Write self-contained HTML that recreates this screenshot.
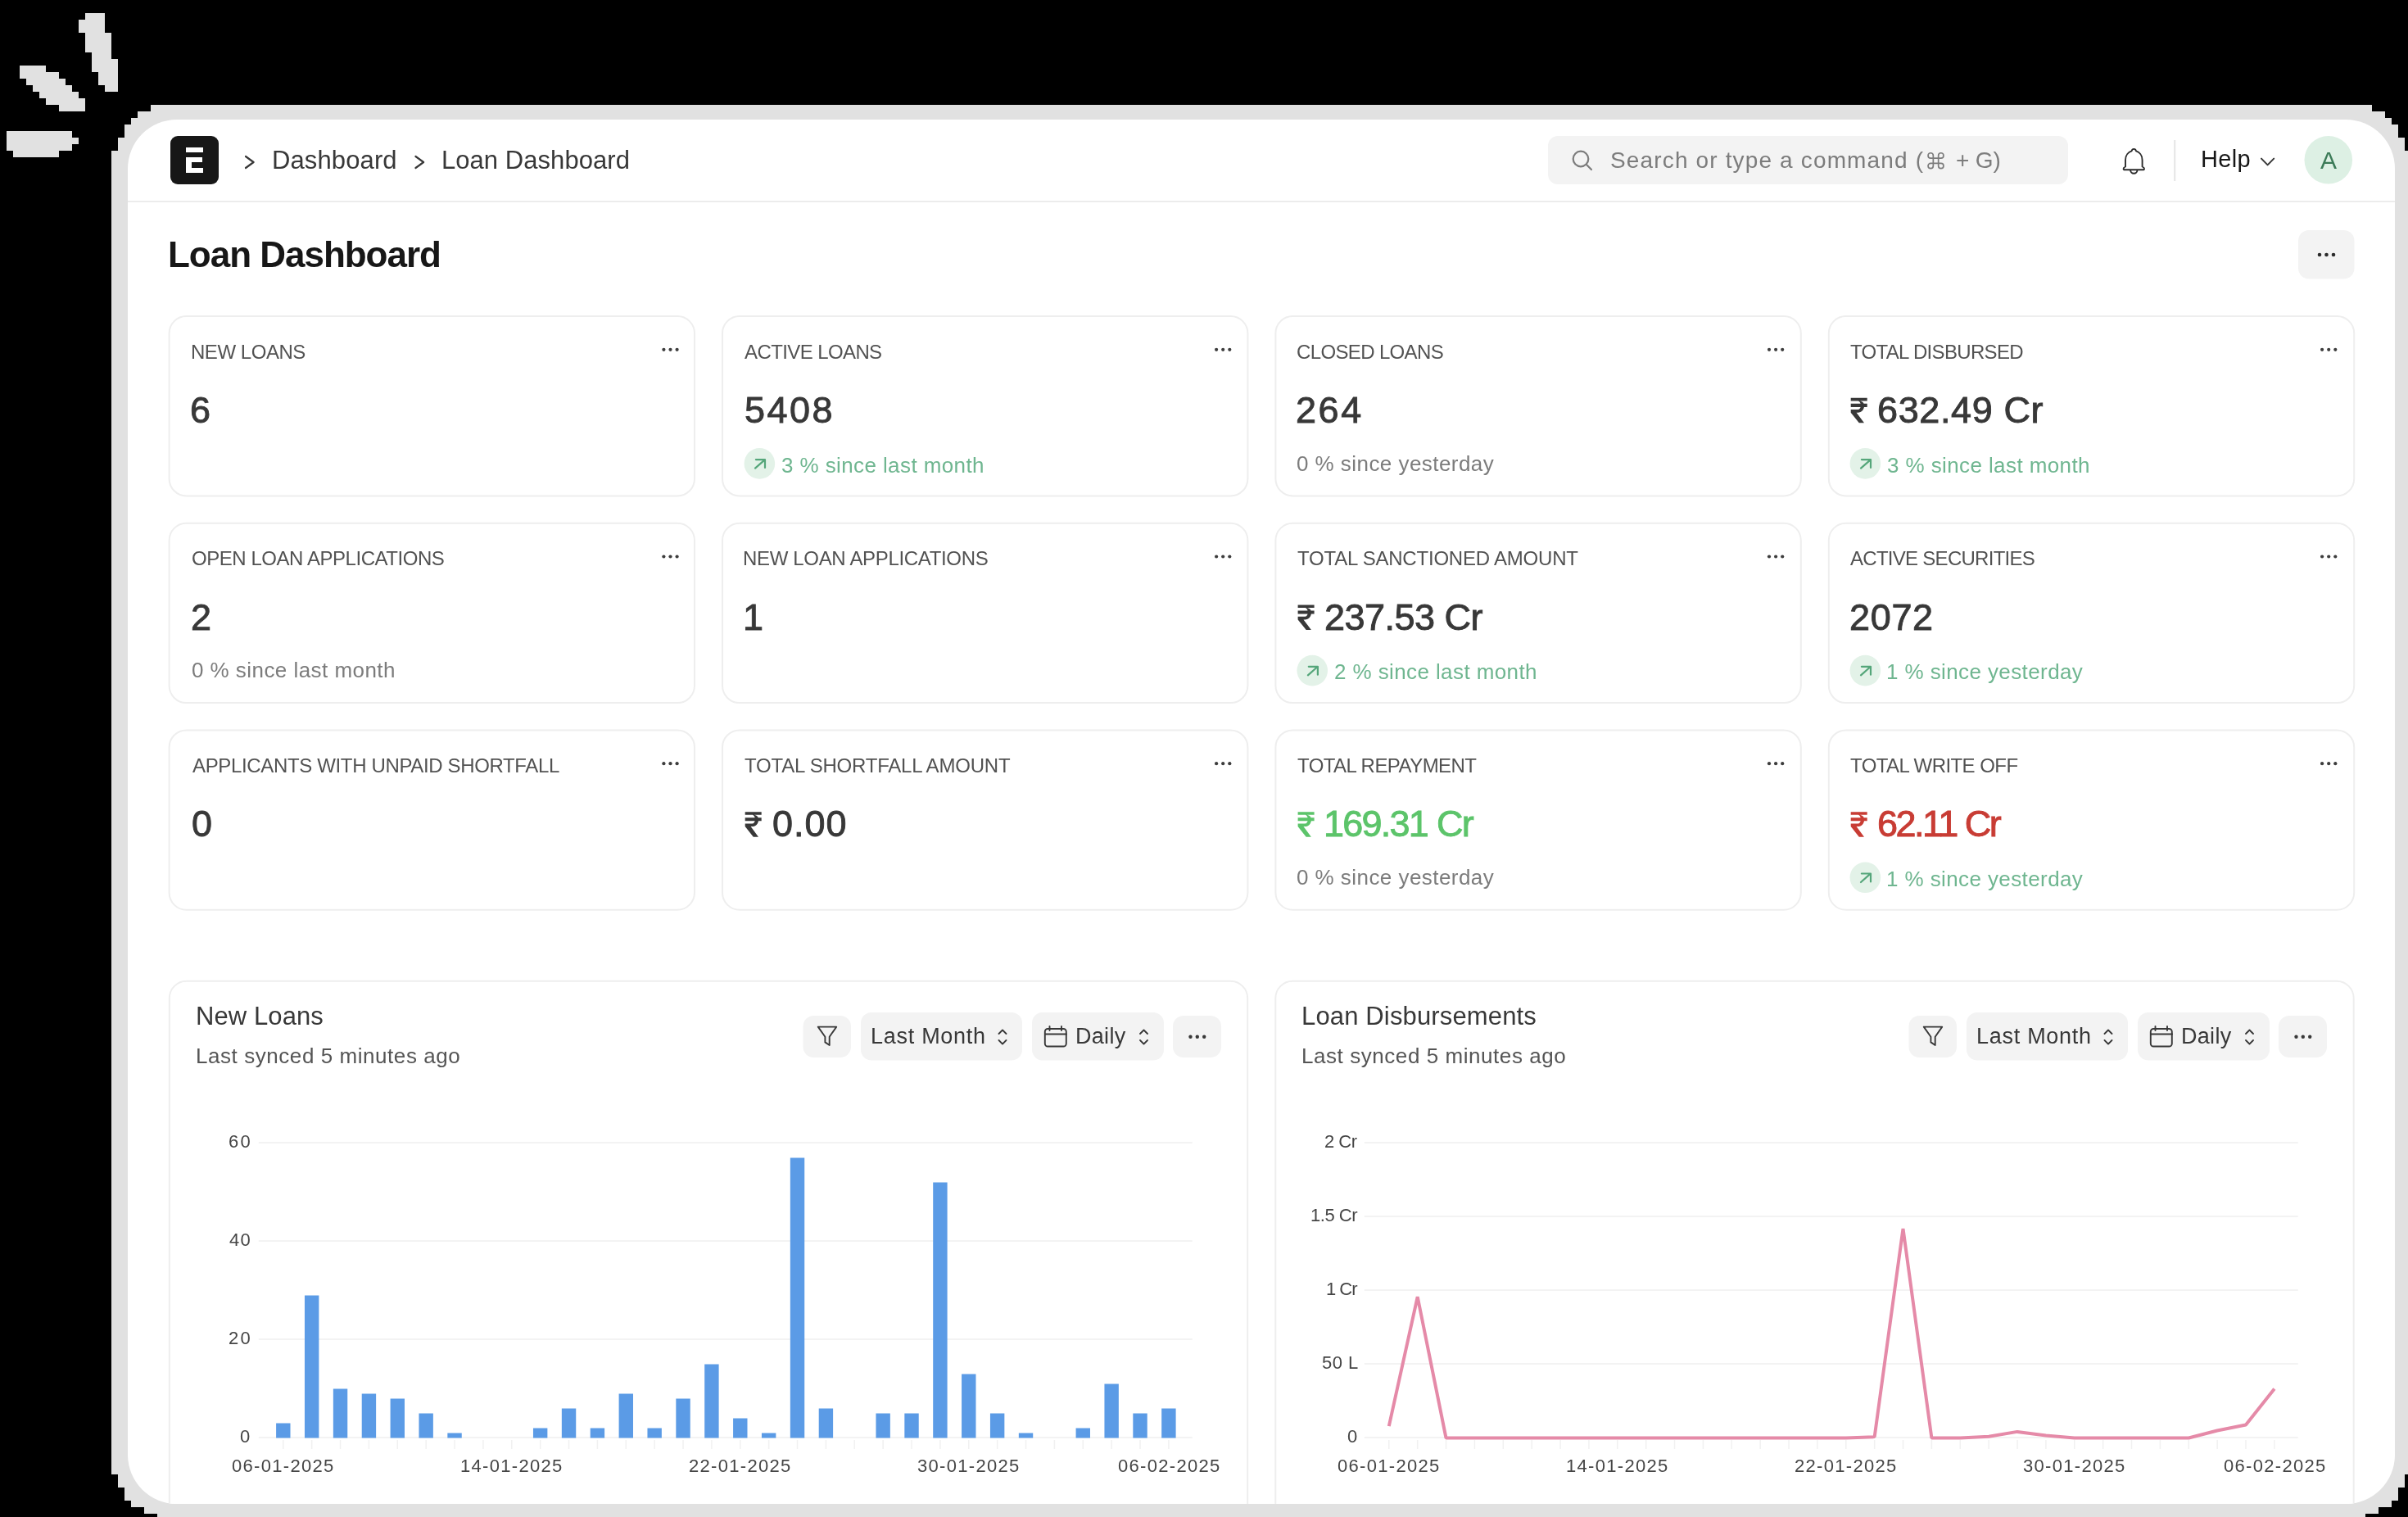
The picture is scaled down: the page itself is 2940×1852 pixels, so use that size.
<!DOCTYPE html>
<html><head><meta charset="utf-8"><title>Loan Dashboard</title>
<style>
html,body{margin:0;padding:0;background:#000;width:2940px;height:1852px;overflow:hidden}
svg{position:absolute;left:0;top:0}
.t{position:absolute;white-space:nowrap;line-height:1;font-family:'Liberation Sans', sans-serif;will-change:transform}
</style></head><body>
<svg width="2940" height="1852" viewBox="0 0 2940 1852">
<rect x="104" y="16" width="24" height="24" rx="0" fill="#e1e1e1"/>
<rect x="96" y="24" width="8" height="16" rx="0" fill="#e1e1e1"/>
<rect x="104" y="40" width="32" height="24" rx="0" fill="#e1e1e1"/>
<rect x="112" y="64" width="24" height="8" rx="0" fill="#e1e1e1"/>
<rect x="112" y="72" width="32" height="16" rx="0" fill="#e1e1e1"/>
<rect x="120" y="88" width="24" height="16" rx="0" fill="#e1e1e1"/>
<rect x="128" y="104" width="16" height="8" rx="0" fill="#e1e1e1"/>
<rect x="24" y="80" width="32" height="8" rx="0" fill="#e1e1e1"/>
<rect x="24" y="88" width="48" height="8" rx="0" fill="#e1e1e1"/>
<rect x="32" y="96" width="48" height="8" rx="0" fill="#e1e1e1"/>
<rect x="40" y="104" width="48" height="8" rx="0" fill="#e1e1e1"/>
<rect x="48" y="112" width="48" height="8" rx="0" fill="#e1e1e1"/>
<rect x="56" y="120" width="48" height="8" rx="0" fill="#e1e1e1"/>
<rect x="72" y="128" width="32" height="8" rx="0" fill="#e1e1e1"/>
<rect x="8" y="160" width="80" height="8" rx="0" fill="#e1e1e1"/>
<rect x="8" y="168" width="88" height="8" rx="0" fill="#e1e1e1"/>
<rect x="8" y="176" width="80" height="8" rx="0" fill="#e1e1e1"/>
<rect x="16" y="184" width="56" height="8" rx="0" fill="#e1e1e1"/>
<rect x="184" y="128" width="2712" height="8" rx="0" fill="#e1e1e1"/>
<rect x="168" y="136" width="2744" height="8" rx="0" fill="#e1e1e1"/>
<rect x="160" y="144" width="2760" height="8" rx="0" fill="#e1e1e1"/>
<rect x="152" y="152" width="2776" height="16" rx="0" fill="#e1e1e1"/>
<rect x="144" y="168" width="2792" height="16" rx="0" fill="#e1e1e1"/>
<rect x="136" y="184" width="2808" height="1616" rx="0" fill="#e1e1e1"/>
<rect x="144" y="1800" width="2792" height="16" rx="0" fill="#e1e1e1"/>
<rect x="152" y="1816" width="2776" height="16" rx="0" fill="#e1e1e1"/>
<rect x="160" y="1832" width="2760" height="8" rx="0" fill="#e1e1e1"/>
<rect x="176" y="1840" width="2728" height="8" rx="0" fill="#e1e1e1"/>
<rect x="192" y="1848" width="2696" height="12" rx="0" fill="#e1e1e1"/>
<rect x="156" y="146" width="2768" height="1690" rx="60" fill="#ffffff"/>
<defs><clipPath id="cl"><rect x="156" y="146" width="2768" height="1690" rx="60"/></clipPath></defs>
<g clip-path="url(#cl)">
<rect x="156" y="245" width="2768" height="2" rx="0" fill="#ececec"/>
<rect x="208" y="166" width="59" height="59" rx="9" fill="#171717"/>
<path d="M227 180h21v6h-21z M227 192h20v6h-13v7h14v6h-21z" fill="#fff"/>
<path d="M300.0 191 L309.6 198 L300.0 205" fill="none" stroke="#383838" stroke-width="2.2" stroke-linecap="round" stroke-linejoin="round"/>
<path d="M507.49999999999994 191 L517.0999999999999 198 L507.49999999999994 205" fill="none" stroke="#383838" stroke-width="2.2" stroke-linecap="round" stroke-linejoin="round"/>
<rect x="1890" y="166" width="635" height="59" rx="12" fill="#f3f3f3"/>
<circle cx="1930" cy="194" r="9.3" fill="none" stroke="#7c7c7c" stroke-width="2.2"/><path d="M1937 201 L1943 207" stroke="#7c7c7c" stroke-width="2.2" stroke-linecap="round"/>
<g transform="translate(2350.9,183.6) scale(1.05)"><path d="M15 6v12a3 3 0 1 0 3-3H6a3 3 0 1 0 3 3V6a3 3 0 1 0-3 3h12a3 3 0 1 0-3-3" fill="none" stroke="#7c7c7c" stroke-width="1.62"/></g>
<path d="M2595 203.5 L2595 195.5 C2595 189.5 2598.8 185.6 2602.6 184.4 C2603 182.7 2604 181.9 2605.3 181.9 C2606.6 181.9 2607.6 182.7 2608 184.4 C2611.8 185.6 2615.6 189.5 2615.6 195.5 L2615.6 203.5 C2617.2 204.2 2618 205 2618 205.9 C2618 206.8 2617.3 207.3 2616.3 207.3 L2594.3 207.3 C2593.3 207.3 2592.6 206.8 2592.6 205.9 C2592.6 205 2593.4 204.2 2595 203.5 Z M2601.1 207.5 A4.2 4.2 0 0 0 2609.5 207.5" fill="none" stroke="#2b2b2b" stroke-width="1.9" stroke-linejoin="round"/>
<rect x="2654.2" y="171" width="2" height="50" rx="0" fill="#e5e5e5"/>
<path d="M2761 193.6 L2768.6 201.4 L2776.2 193.6" fill="none" stroke="#383838" stroke-width="2" stroke-linecap="round" stroke-linejoin="round"/>
<circle cx="2842.8" cy="195.3" r="29.3" fill="#ddf0e4"/>
<rect x="2806" y="281" width="68.5" height="59.5" rx="13" fill="#f3f3f3"/>
<circle cx="2832" cy="311" r="2.3" fill="#2b2b2b"/>
<circle cx="2840.5" cy="311" r="2.3" fill="#2b2b2b"/>
<circle cx="2849" cy="311" r="2.3" fill="#2b2b2b"/>
<rect x="206.6" y="386.0" width="641.4" height="219.4" rx="21" fill="#fff" stroke="#eeeeee" stroke-width="2"/>
<circle cx="810.4" cy="426.8" r="2.1" fill="#3d3d3d"/>
<circle cx="818.5" cy="426.8" r="2.1" fill="#3d3d3d"/>
<circle cx="826.6" cy="426.8" r="2.1" fill="#3d3d3d"/>
<rect x="882.0" y="386.0" width="641.4" height="219.4" rx="21" fill="#fff" stroke="#eeeeee" stroke-width="2"/>
<circle cx="1485.1" cy="426.8" r="2.1" fill="#3d3d3d"/>
<circle cx="1493.2" cy="426.8" r="2.1" fill="#3d3d3d"/>
<circle cx="1501.3000000000002" cy="426.8" r="2.1" fill="#3d3d3d"/>
<circle cx="927.35" cy="565.9" r="18.8" fill="#e3f2e8"/>
<path d="M922.0 571.6 L933.7 561.3 M922.9000000000001 561.1 H934.0 V571" fill="none" stroke="#55a67a" stroke-width="2.2" stroke-linecap="round" stroke-linejoin="round"/>
<rect x="1557.3999999999999" y="386.0" width="641.4" height="219.4" rx="21" fill="#fff" stroke="#eeeeee" stroke-width="2"/>
<circle cx="2160.0" cy="426.8" r="2.1" fill="#3d3d3d"/>
<circle cx="2168.1" cy="426.8" r="2.1" fill="#3d3d3d"/>
<circle cx="2176.2" cy="426.8" r="2.1" fill="#3d3d3d"/>
<rect x="2232.7999999999997" y="386.0" width="641.4" height="219.4" rx="21" fill="#fff" stroke="#eeeeee" stroke-width="2"/>
<circle cx="2835.1" cy="426.8" r="2.1" fill="#3d3d3d"/>
<circle cx="2843.2" cy="426.8" r="2.1" fill="#3d3d3d"/>
<circle cx="2851.2999999999997" cy="426.8" r="2.1" fill="#3d3d3d"/>
<path transform="translate(2259.7,485.8) scale(1.0)" d="M0 0H20V3.6H0Z M0 7H20V11.1H0Z M0 14.3H8.4C10.9 14.3 12.2 12.2 12.2 9.3C12.2 6.3 10.9 3.6 8.4 3.6H9.6C14.4 3.6 16.4 6.2 16.4 9.3C16.4 14.6 13.2 17.9 8.6 17.9H0Z M0 17.9H6.9L16.3 30.5H10.1Z" fill="#383838"/>
<circle cx="2277.35" cy="565.9" r="18.8" fill="#e3f2e8"/>
<path d="M2272.0 571.6 L2283.7 561.3 M2272.8999999999996 561.1 H2284.0 V571" fill="none" stroke="#55a67a" stroke-width="2.2" stroke-linecap="round" stroke-linejoin="round"/>
<rect x="206.6" y="638.7" width="641.4" height="219.4" rx="21" fill="#fff" stroke="#eeeeee" stroke-width="2"/>
<circle cx="810.4" cy="679.5" r="2.1" fill="#3d3d3d"/>
<circle cx="818.5" cy="679.5" r="2.1" fill="#3d3d3d"/>
<circle cx="826.6" cy="679.5" r="2.1" fill="#3d3d3d"/>
<rect x="882.0" y="638.7" width="641.4" height="219.4" rx="21" fill="#fff" stroke="#eeeeee" stroke-width="2"/>
<circle cx="1485.1" cy="679.5" r="2.1" fill="#3d3d3d"/>
<circle cx="1493.2" cy="679.5" r="2.1" fill="#3d3d3d"/>
<circle cx="1501.3000000000002" cy="679.5" r="2.1" fill="#3d3d3d"/>
<rect x="1557.3999999999999" y="638.7" width="641.4" height="219.4" rx="21" fill="#fff" stroke="#eeeeee" stroke-width="2"/>
<circle cx="2160.0" cy="679.5" r="2.1" fill="#3d3d3d"/>
<circle cx="2168.1" cy="679.5" r="2.1" fill="#3d3d3d"/>
<circle cx="2176.2" cy="679.5" r="2.1" fill="#3d3d3d"/>
<path transform="translate(1584.6,738.5) scale(1.0)" d="M0 0H20V3.6H0Z M0 7H20V11.1H0Z M0 14.3H8.4C10.9 14.3 12.2 12.2 12.2 9.3C12.2 6.3 10.9 3.6 8.4 3.6H9.6C14.4 3.6 16.4 6.2 16.4 9.3C16.4 14.6 13.2 17.9 8.6 17.9H0Z M0 17.9H6.9L16.3 30.5H10.1Z" fill="#383838"/>
<circle cx="1602.25" cy="818.6" r="18.8" fill="#e3f2e8"/>
<path d="M1596.8999999999999 824.3000000000001 L1608.6 814.0 M1597.8 813.8000000000001 H1608.8999999999999 V823.7" fill="none" stroke="#55a67a" stroke-width="2.2" stroke-linecap="round" stroke-linejoin="round"/>
<rect x="2232.7999999999997" y="638.7" width="641.4" height="219.4" rx="21" fill="#fff" stroke="#eeeeee" stroke-width="2"/>
<circle cx="2835.1" cy="679.5" r="2.1" fill="#3d3d3d"/>
<circle cx="2843.2" cy="679.5" r="2.1" fill="#3d3d3d"/>
<circle cx="2851.2999999999997" cy="679.5" r="2.1" fill="#3d3d3d"/>
<circle cx="2277.35" cy="818.6" r="18.8" fill="#e3f2e8"/>
<path d="M2272.0 824.3000000000001 L2283.7 814.0 M2272.8999999999996 813.8000000000001 H2284.0 V823.7" fill="none" stroke="#55a67a" stroke-width="2.2" stroke-linecap="round" stroke-linejoin="round"/>
<rect x="206.6" y="891.4" width="641.4" height="219.4" rx="21" fill="#fff" stroke="#eeeeee" stroke-width="2"/>
<circle cx="810.4" cy="932.1999999999999" r="2.1" fill="#3d3d3d"/>
<circle cx="818.5" cy="932.1999999999999" r="2.1" fill="#3d3d3d"/>
<circle cx="826.6" cy="932.1999999999999" r="2.1" fill="#3d3d3d"/>
<rect x="882.0" y="891.4" width="641.4" height="219.4" rx="21" fill="#fff" stroke="#eeeeee" stroke-width="2"/>
<circle cx="1485.1" cy="932.1999999999999" r="2.1" fill="#3d3d3d"/>
<circle cx="1493.2" cy="932.1999999999999" r="2.1" fill="#3d3d3d"/>
<circle cx="1501.3000000000002" cy="932.1999999999999" r="2.1" fill="#3d3d3d"/>
<path transform="translate(909.7,991.1999999999999) scale(1.0)" d="M0 0H20V3.6H0Z M0 7H20V11.1H0Z M0 14.3H8.4C10.9 14.3 12.2 12.2 12.2 9.3C12.2 6.3 10.9 3.6 8.4 3.6H9.6C14.4 3.6 16.4 6.2 16.4 9.3C16.4 14.6 13.2 17.9 8.6 17.9H0Z M0 17.9H6.9L16.3 30.5H10.1Z" fill="#383838"/>
<rect x="1557.3999999999999" y="891.4" width="641.4" height="219.4" rx="21" fill="#fff" stroke="#eeeeee" stroke-width="2"/>
<circle cx="2160.0" cy="932.1999999999999" r="2.1" fill="#3d3d3d"/>
<circle cx="2168.1" cy="932.1999999999999" r="2.1" fill="#3d3d3d"/>
<circle cx="2176.2" cy="932.1999999999999" r="2.1" fill="#3d3d3d"/>
<path transform="translate(1584.6,991.1999999999999) scale(1.0)" d="M0 0H20V3.6H0Z M0 7H20V11.1H0Z M0 14.3H8.4C10.9 14.3 12.2 12.2 12.2 9.3C12.2 6.3 10.9 3.6 8.4 3.6H9.6C14.4 3.6 16.4 6.2 16.4 9.3C16.4 14.6 13.2 17.9 8.6 17.9H0Z M0 17.9H6.9L16.3 30.5H10.1Z" fill="#5cc46a"/>
<rect x="2232.7999999999997" y="891.4" width="641.4" height="219.4" rx="21" fill="#fff" stroke="#eeeeee" stroke-width="2"/>
<circle cx="2835.1" cy="932.1999999999999" r="2.1" fill="#3d3d3d"/>
<circle cx="2843.2" cy="932.1999999999999" r="2.1" fill="#3d3d3d"/>
<circle cx="2851.2999999999997" cy="932.1999999999999" r="2.1" fill="#3d3d3d"/>
<path transform="translate(2259.7,991.1999999999999) scale(1.0)" d="M0 0H20V3.6H0Z M0 7H20V11.1H0Z M0 14.3H8.4C10.9 14.3 12.2 12.2 12.2 9.3C12.2 6.3 10.9 3.6 8.4 3.6H9.6C14.4 3.6 16.4 6.2 16.4 9.3C16.4 14.6 13.2 17.9 8.6 17.9H0Z M0 17.9H6.9L16.3 30.5H10.1Z" fill="#c83c34"/>
<circle cx="2277.35" cy="1071.3" r="18.8" fill="#e3f2e8"/>
<path d="M2272.0 1077.0 L2283.7 1066.7 M2272.8999999999996 1066.5 H2284.0 V1076.4" fill="none" stroke="#55a67a" stroke-width="2.2" stroke-linecap="round" stroke-linejoin="round"/>
<rect x="206.8" y="1197.7" width="1316.4" height="800" rx="21" fill="#fff" stroke="#eeeeee" stroke-width="2"/>
<rect x="980.5" y="1240" width="58.5" height="51" rx="13" fill="#f3f3f3"/>
<path d="M998.8 1253.6 H1021.2 L1012.7 1265.8 V1276 L1007.4 1272.4 V1265.8 Z" fill="none" stroke="#383838" stroke-width="1.9" stroke-linejoin="round"/>
<rect x="1051" y="1236" width="197" height="58.5" rx="13" fill="#f3f3f3"/>
<path d="M1219.5 1262 L1224 1257.5 L1228.5 1262 M1219.5 1270 L1224 1274.5 L1228.5 1270" fill="none" stroke="#383838" stroke-width="1.8" stroke-linecap="round" stroke-linejoin="round"/>
<rect x="1260" y="1236" width="161" height="58.5" rx="13" fill="#f3f3f3"/>
<rect x="1275.8" y="1256" width="26" height="21.5" rx="3.5" fill="none" stroke="#383838" stroke-width="1.9"/><path d="M1276 1262.5 H1302 M1281.5 1253 V1258 M1296 1253 V1258" stroke="#383838" stroke-width="1.9" stroke-linecap="round"/>
<path d="M1392 1262 L1396.5 1257.5 L1401 1262 M1392 1270 L1396.5 1274.5 L1401 1270" fill="none" stroke="#383838" stroke-width="1.8" stroke-linecap="round" stroke-linejoin="round"/>
<rect x="1432" y="1240" width="59" height="51" rx="13" fill="#f3f3f3"/>
<circle cx="1453.5" cy="1265.7" r="2.2" fill="#383838"/>
<circle cx="1461.8" cy="1265.7" r="2.2" fill="#383838"/>
<circle cx="1470.2" cy="1265.7" r="2.2" fill="#383838"/>
<rect x="345.05" y="1758" width="1.5" height="11" rx="0" fill="#f1f1f1"/>
<rect x="379.92400000000004" y="1758" width="1.5" height="11" rx="0" fill="#f1f1f1"/>
<rect x="414.798" y="1758" width="1.5" height="11" rx="0" fill="#f1f1f1"/>
<rect x="449.672" y="1758" width="1.5" height="11" rx="0" fill="#f1f1f1"/>
<rect x="484.54600000000005" y="1758" width="1.5" height="11" rx="0" fill="#f1f1f1"/>
<rect x="519.4200000000001" y="1758" width="1.5" height="11" rx="0" fill="#f1f1f1"/>
<rect x="554.2940000000001" y="1758" width="1.5" height="11" rx="0" fill="#f1f1f1"/>
<rect x="589.168" y="1758" width="1.5" height="11" rx="0" fill="#f1f1f1"/>
<rect x="624.042" y="1758" width="1.5" height="11" rx="0" fill="#f1f1f1"/>
<rect x="658.916" y="1758" width="1.5" height="11" rx="0" fill="#f1f1f1"/>
<rect x="693.79" y="1758" width="1.5" height="11" rx="0" fill="#f1f1f1"/>
<rect x="728.664" y="1758" width="1.5" height="11" rx="0" fill="#f1f1f1"/>
<rect x="763.538" y="1758" width="1.5" height="11" rx="0" fill="#f1f1f1"/>
<rect x="798.412" y="1758" width="1.5" height="11" rx="0" fill="#f1f1f1"/>
<rect x="833.2860000000001" y="1758" width="1.5" height="11" rx="0" fill="#f1f1f1"/>
<rect x="868.1600000000001" y="1758" width="1.5" height="11" rx="0" fill="#f1f1f1"/>
<rect x="903.0340000000001" y="1758" width="1.5" height="11" rx="0" fill="#f1f1f1"/>
<rect x="937.9080000000001" y="1758" width="1.5" height="11" rx="0" fill="#f1f1f1"/>
<rect x="972.7820000000002" y="1758" width="1.5" height="11" rx="0" fill="#f1f1f1"/>
<rect x="1007.656" y="1758" width="1.5" height="11" rx="0" fill="#f1f1f1"/>
<rect x="1042.53" y="1758" width="1.5" height="11" rx="0" fill="#f1f1f1"/>
<rect x="1077.404" y="1758" width="1.5" height="11" rx="0" fill="#f1f1f1"/>
<rect x="1112.278" y="1758" width="1.5" height="11" rx="0" fill="#f1f1f1"/>
<rect x="1147.152" y="1758" width="1.5" height="11" rx="0" fill="#f1f1f1"/>
<rect x="1182.026" y="1758" width="1.5" height="11" rx="0" fill="#f1f1f1"/>
<rect x="1216.9" y="1758" width="1.5" height="11" rx="0" fill="#f1f1f1"/>
<rect x="1251.7740000000001" y="1758" width="1.5" height="11" rx="0" fill="#f1f1f1"/>
<rect x="1286.6480000000001" y="1758" width="1.5" height="11" rx="0" fill="#f1f1f1"/>
<rect x="1321.5220000000002" y="1758" width="1.5" height="11" rx="0" fill="#f1f1f1"/>
<rect x="1356.3960000000002" y="1758" width="1.5" height="11" rx="0" fill="#f1f1f1"/>
<rect x="1391.27" y="1758" width="1.5" height="11" rx="0" fill="#f1f1f1"/>
<rect x="1426.144" y="1758" width="1.5" height="11" rx="0" fill="#f1f1f1"/>
<rect x="315.8" y="1394" width="1139.9" height="2" rx="0" fill="#f3f3f3"/>
<rect x="315.8" y="1514" width="1139.9" height="2" rx="0" fill="#f3f3f3"/>
<rect x="315.8" y="1634" width="1139.9" height="2" rx="0" fill="#f3f3f3"/>
<rect x="315.8" y="1754" width="1139.9" height="2" rx="0" fill="#f3f3f3"/>
<rect x="337.1" y="1737.5" width="17.4" height="18" rx="0" fill="#5b9be6"/>
<rect x="371.97400000000005" y="1581.5" width="17.4" height="174" rx="0" fill="#5b9be6"/>
<rect x="406.848" y="1695.5" width="17.4" height="60" rx="0" fill="#5b9be6"/>
<rect x="441.72200000000004" y="1701.5" width="17.4" height="54" rx="0" fill="#5b9be6"/>
<rect x="476.59600000000006" y="1707.5" width="17.4" height="48" rx="0" fill="#5b9be6"/>
<rect x="511.4700000000001" y="1725.5" width="17.4" height="30" rx="0" fill="#5b9be6"/>
<rect x="546.344" y="1749.5" width="17.4" height="6" rx="0" fill="#5b9be6"/>
<rect x="650.966" y="1743.5" width="17.4" height="12" rx="0" fill="#5b9be6"/>
<rect x="685.8399999999999" y="1719.5" width="17.4" height="36" rx="0" fill="#5b9be6"/>
<rect x="720.7139999999999" y="1743.5" width="17.4" height="12" rx="0" fill="#5b9be6"/>
<rect x="755.588" y="1701.5" width="17.4" height="54" rx="0" fill="#5b9be6"/>
<rect x="790.462" y="1743.5" width="17.4" height="12" rx="0" fill="#5b9be6"/>
<rect x="825.336" y="1707.5" width="17.4" height="48" rx="0" fill="#5b9be6"/>
<rect x="860.21" y="1665.5" width="17.4" height="90" rx="0" fill="#5b9be6"/>
<rect x="895.0840000000001" y="1731.5" width="17.4" height="24" rx="0" fill="#5b9be6"/>
<rect x="929.9580000000001" y="1749.5" width="17.4" height="6" rx="0" fill="#5b9be6"/>
<rect x="964.8320000000001" y="1413.5" width="17.4" height="342" rx="0" fill="#5b9be6"/>
<rect x="999.7059999999999" y="1719.5" width="17.4" height="36" rx="0" fill="#5b9be6"/>
<rect x="1069.454" y="1725.5" width="17.4" height="30" rx="0" fill="#5b9be6"/>
<rect x="1104.328" y="1725.5" width="17.4" height="30" rx="0" fill="#5b9be6"/>
<rect x="1139.202" y="1443.5" width="17.4" height="312" rx="0" fill="#5b9be6"/>
<rect x="1174.076" y="1677.5" width="17.4" height="78" rx="0" fill="#5b9be6"/>
<rect x="1208.95" y="1725.5" width="17.4" height="30" rx="0" fill="#5b9be6"/>
<rect x="1243.824" y="1749.5" width="17.4" height="6" rx="0" fill="#5b9be6"/>
<rect x="1313.5720000000001" y="1743.5" width="17.4" height="12" rx="0" fill="#5b9be6"/>
<rect x="1348.4460000000001" y="1689.5" width="17.4" height="66" rx="0" fill="#5b9be6"/>
<rect x="1383.32" y="1725.5" width="17.4" height="30" rx="0" fill="#5b9be6"/>
<rect x="1418.194" y="1719.5" width="17.4" height="36" rx="0" fill="#5b9be6"/>
<rect x="1557.3" y="1197.7" width="1316.4" height="800" rx="21" fill="#fff" stroke="#eeeeee" stroke-width="2"/>
<rect x="2330.5" y="1240" width="58.5" height="51" rx="13" fill="#f3f3f3"/>
<path d="M2348.8 1253.6 H2371.2 L2362.7 1265.8 V1276 L2357.4 1272.4 V1265.8 Z" fill="none" stroke="#383838" stroke-width="1.9" stroke-linejoin="round"/>
<rect x="2401" y="1236" width="197" height="58.5" rx="13" fill="#f3f3f3"/>
<path d="M2569.5 1262 L2574 1257.5 L2578.5 1262 M2569.5 1270 L2574 1274.5 L2578.5 1270" fill="none" stroke="#383838" stroke-width="1.8" stroke-linecap="round" stroke-linejoin="round"/>
<rect x="2610" y="1236" width="161" height="58.5" rx="13" fill="#f3f3f3"/>
<rect x="2625.8" y="1256" width="26" height="21.5" rx="3.5" fill="none" stroke="#383838" stroke-width="1.9"/><path d="M2626 1262.5 H2652 M2631.5 1253 V1258 M2646 1253 V1258" stroke="#383838" stroke-width="1.9" stroke-linecap="round"/>
<path d="M2742 1262 L2746.5 1257.5 L2751 1262 M2742 1270 L2746.5 1274.5 L2751 1270" fill="none" stroke="#383838" stroke-width="1.8" stroke-linecap="round" stroke-linejoin="round"/>
<rect x="2782" y="1240" width="59" height="51" rx="13" fill="#f3f3f3"/>
<circle cx="2803.5" cy="1265.7" r="2.2" fill="#383838"/>
<circle cx="2811.8" cy="1265.7" r="2.2" fill="#383838"/>
<circle cx="2820.2" cy="1265.7" r="2.2" fill="#383838"/>
<rect x="1695.05" y="1758" width="1.5" height="11" rx="0" fill="#f1f1f1"/>
<rect x="1729.924" y="1758" width="1.5" height="11" rx="0" fill="#f1f1f1"/>
<rect x="1764.798" y="1758" width="1.5" height="11" rx="0" fill="#f1f1f1"/>
<rect x="1799.672" y="1758" width="1.5" height="11" rx="0" fill="#f1f1f1"/>
<rect x="1834.546" y="1758" width="1.5" height="11" rx="0" fill="#f1f1f1"/>
<rect x="1869.42" y="1758" width="1.5" height="11" rx="0" fill="#f1f1f1"/>
<rect x="1904.2939999999999" y="1758" width="1.5" height="11" rx="0" fill="#f1f1f1"/>
<rect x="1939.168" y="1758" width="1.5" height="11" rx="0" fill="#f1f1f1"/>
<rect x="1974.042" y="1758" width="1.5" height="11" rx="0" fill="#f1f1f1"/>
<rect x="2008.916" y="1758" width="1.5" height="11" rx="0" fill="#f1f1f1"/>
<rect x="2043.79" y="1758" width="1.5" height="11" rx="0" fill="#f1f1f1"/>
<rect x="2078.6639999999998" y="1758" width="1.5" height="11" rx="0" fill="#f1f1f1"/>
<rect x="2113.538" y="1758" width="1.5" height="11" rx="0" fill="#f1f1f1"/>
<rect x="2148.412" y="1758" width="1.5" height="11" rx="0" fill="#f1f1f1"/>
<rect x="2183.286" y="1758" width="1.5" height="11" rx="0" fill="#f1f1f1"/>
<rect x="2218.16" y="1758" width="1.5" height="11" rx="0" fill="#f1f1f1"/>
<rect x="2253.034" y="1758" width="1.5" height="11" rx="0" fill="#f1f1f1"/>
<rect x="2287.908" y="1758" width="1.5" height="11" rx="0" fill="#f1f1f1"/>
<rect x="2322.782" y="1758" width="1.5" height="11" rx="0" fill="#f1f1f1"/>
<rect x="2357.656" y="1758" width="1.5" height="11" rx="0" fill="#f1f1f1"/>
<rect x="2392.5299999999997" y="1758" width="1.5" height="11" rx="0" fill="#f1f1f1"/>
<rect x="2427.404" y="1758" width="1.5" height="11" rx="0" fill="#f1f1f1"/>
<rect x="2462.2780000000002" y="1758" width="1.5" height="11" rx="0" fill="#f1f1f1"/>
<rect x="2497.152" y="1758" width="1.5" height="11" rx="0" fill="#f1f1f1"/>
<rect x="2532.026" y="1758" width="1.5" height="11" rx="0" fill="#f1f1f1"/>
<rect x="2566.9" y="1758" width="1.5" height="11" rx="0" fill="#f1f1f1"/>
<rect x="2601.774" y="1758" width="1.5" height="11" rx="0" fill="#f1f1f1"/>
<rect x="2636.648" y="1758" width="1.5" height="11" rx="0" fill="#f1f1f1"/>
<rect x="2671.522" y="1758" width="1.5" height="11" rx="0" fill="#f1f1f1"/>
<rect x="2706.396" y="1758" width="1.5" height="11" rx="0" fill="#f1f1f1"/>
<rect x="2741.27" y="1758" width="1.5" height="11" rx="0" fill="#f1f1f1"/>
<rect x="2776.1440000000002" y="1758" width="1.5" height="11" rx="0" fill="#f1f1f1"/>
<rect x="1665.8" y="1394" width="1139.8999999999999" height="2" rx="0" fill="#f3f3f3"/>
<rect x="1665.8" y="1484" width="1139.8999999999999" height="2" rx="0" fill="#f3f3f3"/>
<rect x="1665.8" y="1574" width="1139.8999999999999" height="2" rx="0" fill="#f3f3f3"/>
<rect x="1665.8" y="1664" width="1139.8999999999999" height="2" rx="0" fill="#f3f3f3"/>
<rect x="1665.8" y="1754" width="1139.8999999999999" height="2" rx="0" fill="#f3f3f3"/>
<polyline points="1695.8,1741.1 1730.7,1583.2 1765.5,1755.5 1800.4,1755.5 1835.3,1755.5 1870.2,1755.5 1905.0,1755.5 1939.9,1755.5 1974.8,1755.5 2009.7,1755.5 2044.5,1755.5 2079.4,1755.5 2114.3,1755.5 2149.2,1755.5 2184.0,1755.5 2218.9,1755.5 2253.8,1755.5 2288.7,1754.1 2323.5,1499.9 2358.4,1755.5 2393.3,1755.5 2428.2,1753.7 2463.0,1747.9 2497.9,1752.4 2532.8,1755.5 2567.7,1755.5 2602.5,1755.5 2637.4,1755.5 2672.3,1755.5 2707.1,1746.5 2742.0,1739.5 2776.9,1695.6" fill="none" stroke="#e58aa8" stroke-width="4" stroke-linejoin="bevel"/>
</g>
</svg>
<div class="t" style="left:332.00px;top:179.95px;font-size:31px;color:#383838;letter-spacing:0.12px;">Dashboard</div>
<div class="t" style="left:539.00px;top:179.95px;font-size:31px;color:#383838;letter-spacing:0.05px;">Loan Dashboard</div>
<div class="t" style="left:1966.00px;top:182.49px;font-size:28px;color:#7c7c7c;letter-spacing:1.15px;">Search or type a command (</div>
<div class="t" style="left:2387.50px;top:182.49px;font-size:28px;color:#7c7c7c;letter-spacing:-0.13px;">+ G)</div>
<div class="t" style="left:2687.00px;top:180.45px;font-size:29px;color:#171717;letter-spacing:0.33px;">Help</div>
<div class="t" style="left:2832.70px;top:180.60px;font-size:30px;color:#3b7a57;">A</div>
<div class="t" style="left:205.00px;top:288.65px;font-size:44px;color:#171717;font-weight:bold;letter-spacing:-1.02px;">Loan Dashboard</div>
<div class="t" style="left:232.50px;top:417.68px;font-size:24px;color:#525252;letter-spacing:-0.46px;">NEW LOANS</div>
<div class="t" style="left:232.00px;top:477.80px;font-size:45px;color:#383838;-webkit-text-stroke:0.9px #383838;">6</div>
<div class="t" style="left:909.20px;top:417.68px;font-size:24px;color:#525252;letter-spacing:-0.60px;">ACTIVE LOANS</div>
<div class="t" style="left:908.90px;top:477.80px;font-size:45px;color:#383838;letter-spacing:2.47px;-webkit-text-stroke:0.9px #383838;">5408</div>
<div class="t" style="left:953.70px;top:554.59px;font-size:26px;color:#6fb690;letter-spacing:0.40px;">3 % since last month</div>
<div class="t" style="left:1583.10px;top:417.68px;font-size:24px;color:#525252;letter-spacing:-0.64px;">CLOSED LOANS</div>
<div class="t" style="left:1582.30px;top:477.80px;font-size:45px;color:#383838;letter-spacing:2.55px;-webkit-text-stroke:0.9px #383838;">264</div>
<div class="t" style="left:1583.10px;top:552.59px;font-size:26px;color:#7c7c7c;letter-spacing:0.45px;">0 % since yesterday</div>
<div class="t" style="left:2259.20px;top:417.68px;font-size:24px;color:#525252;letter-spacing:-0.67px;">TOTAL DISBURSED</div>
<div class="t" style="left:2292.40px;top:477.80px;font-size:45px;color:#383838;letter-spacing:0.62px;-webkit-text-stroke:0.9px #383838;">632.49 Cr</div>
<div class="t" style="left:2303.70px;top:554.59px;font-size:26px;color:#6fb690;letter-spacing:0.40px;">3 % since last month</div>
<div class="t" style="left:233.50px;top:670.38px;font-size:24px;color:#525252;letter-spacing:-0.45px;">OPEN LOAN APPLICATIONS</div>
<div class="t" style="left:233.00px;top:730.50px;font-size:45px;color:#383838;-webkit-text-stroke:0.9px #383838;">2</div>
<div class="t" style="left:233.50px;top:805.29px;font-size:26px;color:#7c7c7c;letter-spacing:0.45px;">0 % since last month</div>
<div class="t" style="left:907.20px;top:670.38px;font-size:24px;color:#525252;letter-spacing:-0.33px;">NEW LOAN APPLICATIONS</div>
<div class="t" style="left:906.70px;top:730.50px;font-size:45px;color:#383838;-webkit-text-stroke:0.9px #383838;">1</div>
<div class="t" style="left:1584.10px;top:670.38px;font-size:24px;color:#525252;letter-spacing:-0.21px;">TOTAL SANCTIONED AMOUNT</div>
<div class="t" style="left:1617.30px;top:730.50px;font-size:45px;color:#383838;letter-spacing:-0.52px;-webkit-text-stroke:0.9px #383838;">237.53 Cr</div>
<div class="t" style="left:1628.60px;top:807.29px;font-size:26px;color:#6fb690;letter-spacing:0.40px;">2 % since last month</div>
<div class="t" style="left:2259.20px;top:670.38px;font-size:24px;color:#525252;letter-spacing:-0.72px;">ACTIVE SECURITIES</div>
<div class="t" style="left:2258.30px;top:730.50px;font-size:45px;color:#383838;letter-spacing:0.67px;-webkit-text-stroke:0.9px #383838;">2072</div>
<div class="t" style="left:2302.70px;top:807.29px;font-size:26px;color:#6fb690;letter-spacing:0.40px;">1 % since yesterday</div>
<div class="t" style="left:234.50px;top:923.08px;font-size:24px;color:#525252;letter-spacing:-0.35px;">APPLICANTS WITH UNPAID SHORTFALL</div>
<div class="t" style="left:234.00px;top:983.20px;font-size:45px;color:#383838;-webkit-text-stroke:0.9px #383838;">0</div>
<div class="t" style="left:909.20px;top:923.08px;font-size:24px;color:#525252;letter-spacing:-0.21px;">TOTAL SHORTFALL AMOUNT</div>
<div class="t" style="left:943.40px;top:983.20px;font-size:45px;color:#383838;letter-spacing:0.97px;-webkit-text-stroke:0.9px #383838;">0.00</div>
<div class="t" style="left:1584.10px;top:923.08px;font-size:24px;color:#525252;letter-spacing:-0.55px;">TOTAL REPAYMENT</div>
<div class="t" style="left:1616.30px;top:983.20px;font-size:45px;color:#5cc46a;letter-spacing:-1.75px;-webkit-text-stroke:0.9px #5cc46a;">169.31 Cr</div>
<div class="t" style="left:1583.10px;top:1057.99px;font-size:26px;color:#7c7c7c;letter-spacing:0.45px;">0 % since yesterday</div>
<div class="t" style="left:2259.20px;top:923.08px;font-size:24px;color:#525252;letter-spacing:-0.56px;">TOTAL WRITE OFF</div>
<div class="t" style="left:2292.40px;top:983.20px;font-size:45px;color:#c83c34;letter-spacing:-2.49px;-webkit-text-stroke:0.9px #c83c34;">62.11 Cr</div>
<div class="t" style="left:2302.70px;top:1059.99px;font-size:26px;color:#6fb690;letter-spacing:0.40px;">1 % since yesterday</div>
<div class="t" style="left:238.70px;top:1225.45px;font-size:31px;color:#383838;letter-spacing:0.09px;">New Loans</div>
<div class="t" style="left:238.70px;top:1275.79px;font-size:26px;color:#555555;letter-spacing:0.56px;">Last synced 5 minutes ago</div>
<div class="t" style="left:1062.90px;top:1252.14px;font-size:27px;color:#383838;letter-spacing:0.72px;">Last Month</div>
<div class="t" style="left:1313.00px;top:1252.14px;font-size:27px;color:#383838;letter-spacing:0.30px;">Daily</div>
<div class="t" style="left:283.45px;top:1779.37px;font-size:22px;color:#454545;letter-spacing:1.30px;">06-01-2025</div>
<div class="t" style="left:562.44px;top:1779.37px;font-size:22px;color:#454545;letter-spacing:1.30px;">14-01-2025</div>
<div class="t" style="left:841.43px;top:1779.37px;font-size:22px;color:#454545;letter-spacing:1.30px;">22-01-2025</div>
<div class="t" style="left:1120.43px;top:1779.37px;font-size:22px;color:#454545;letter-spacing:1.30px;">30-01-2025</div>
<div class="t" style="left:1364.54px;top:1779.37px;font-size:22px;color:#454545;letter-spacing:1.30px;">06-02-2025</div>
<div class="t" style="left:279.10px;top:1383.17px;font-size:22px;color:#454545;letter-spacing:2.30px;">60</div>
<div class="t" style="left:280.10px;top:1503.17px;font-size:22px;color:#454545;letter-spacing:1.30px;">40</div>
<div class="t" style="left:279.10px;top:1623.17px;font-size:22px;color:#454545;letter-spacing:2.30px;">20</div>
<div class="t" style="left:293.40px;top:1743.17px;font-size:22px;color:#454545;">0</div>
<div class="t" style="left:1588.70px;top:1225.45px;font-size:31px;color:#383838;letter-spacing:0.15px;">Loan Disbursements</div>
<div class="t" style="left:1588.70px;top:1275.79px;font-size:26px;color:#555555;letter-spacing:0.56px;">Last synced 5 minutes ago</div>
<div class="t" style="left:2412.90px;top:1252.14px;font-size:27px;color:#383838;letter-spacing:0.72px;">Last Month</div>
<div class="t" style="left:2663.00px;top:1252.14px;font-size:27px;color:#383838;letter-spacing:0.30px;">Daily</div>
<div class="t" style="left:1633.45px;top:1779.37px;font-size:22px;color:#454545;letter-spacing:1.30px;">06-01-2025</div>
<div class="t" style="left:1912.44px;top:1779.37px;font-size:22px;color:#454545;letter-spacing:1.30px;">14-01-2025</div>
<div class="t" style="left:2191.43px;top:1779.37px;font-size:22px;color:#454545;letter-spacing:1.30px;">22-01-2025</div>
<div class="t" style="left:2470.43px;top:1779.37px;font-size:22px;color:#454545;letter-spacing:1.30px;">30-01-2025</div>
<div class="t" style="left:2714.54px;top:1779.37px;font-size:22px;color:#454545;letter-spacing:1.30px;">06-02-2025</div>
<div class="t" style="left:1617.00px;top:1383.17px;font-size:22px;color:#454545;letter-spacing:-0.53px;">2 Cr</div>
<div class="t" style="left:1599.70px;top:1473.17px;font-size:22px;color:#454545;letter-spacing:-0.46px;">1.5 Cr</div>
<div class="t" style="left:1618.50px;top:1563.17px;font-size:22px;color:#454545;letter-spacing:-1.03px;">1 Cr</div>
<div class="t" style="left:1614.00px;top:1653.17px;font-size:22px;color:#454545;letter-spacing:0.47px;">50 L</div>
<div class="t" style="left:1645.40px;top:1743.17px;font-size:22px;color:#454545;">0</div>
</body></html>
